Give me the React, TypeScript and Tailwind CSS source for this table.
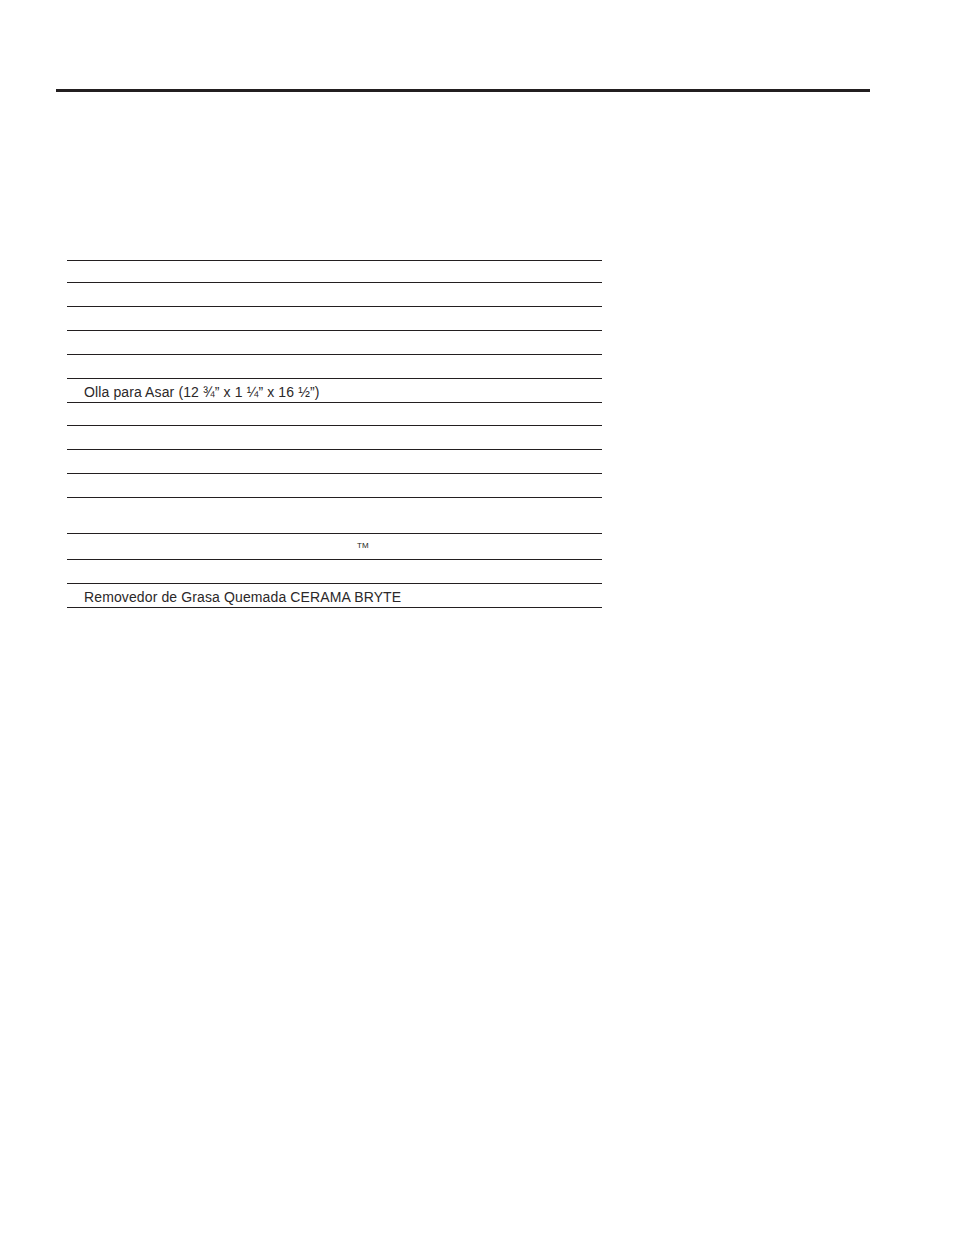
const rows: { h: string; text?: string; tm?: boolean }[] = [
  { h: "h-[22px]" },
  { h: "h-[24px]" },
  { h: "h-[24px]" },
  { h: "h-[24px]" },
  { h: "h-[24px]" },
  { h: "h-[24px]", text: "Olla para Asar (12 ¾” x 1 ¼” x 16 ½”)" },
  { h: "h-[23px]" },
  { h: "h-[24px]" },
  { h: "h-[24px]" },
  { h: "h-[24px]" },
  { h: "h-[36px]" },
  { h: "h-[26px]", tm: true },
  { h: "h-[24px]" },
  { h: "h-[24px]", text: "Removedor de Grasa Quemada CERAMA BRYTE" },
];

export default function App() {
  return (
    <div className="min-h-[1235px] w-full bg-white text-[#231f20] font-['Liberation_Sans',Arial,sans-serif]">
      <div className="pt-[89px] pl-[56px]">
        <div className="h-[3px] w-[814px] bg-[#231f20]" />
      </div>

      <div className="ml-[67px] mt-[168px] w-[535px] border-t border-[#231f20]">
        {rows.map((row, i) => (
          <div
            key={i}
            className={`${row.h} flex border-b border-[#231f20] ${row.tm ? "items-start" : "items-center"}`}
          >
            {row.text && (
              <span className="pl-[17px] pt-[2px] text-[14px] leading-none tracking-[0.12px] text-[#2b2829]">{row.text}</span>
            )}
            {row.tm && <span className="pl-[290px] pt-[8px] text-[8px] leading-none">TM</span>}
          </div>
        ))}
      </div>
    </div>
  );
}
